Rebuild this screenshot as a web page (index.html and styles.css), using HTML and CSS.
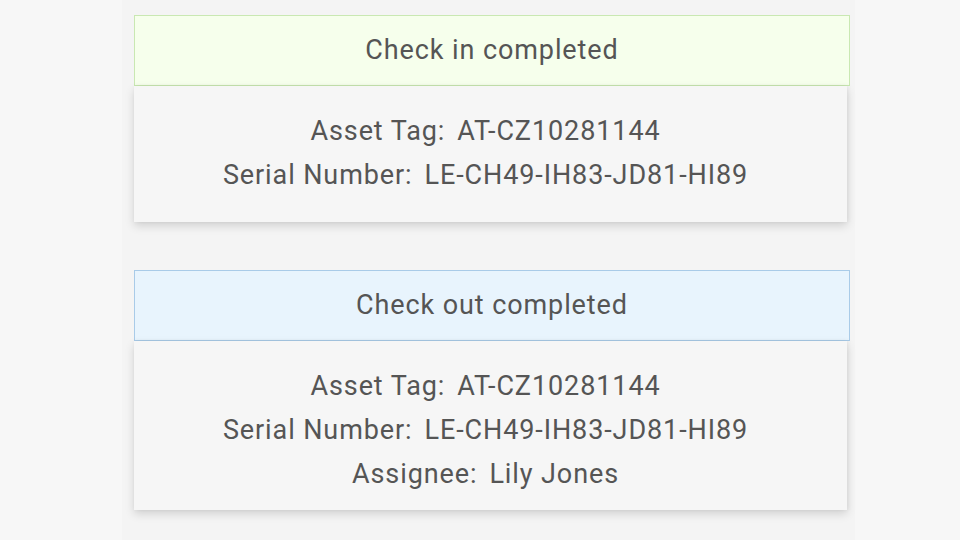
FILE: index.html
```html
<!DOCTYPE html>
<html>
<head>
<meta charset="utf-8">
<link rel="stylesheet" href="styles.css">
</head>
<body>
<div class="page">
  <div class="column">
    <div class="card">
      <div class="card-head head-in">Check in completed</div>
      <div class="card-body">
        <div class="row"><span class="label">Asset Tag:</span><span>AT-CZ10281144</span></div>
        <div class="row"><span class="label">Serial Number:</span><span>LE-CH49-IH83-JD81-HI89</span></div>
        <div class="spacer"></div>
      </div>
    </div>
    <div class="card">
      <div class="card-head head-out">Check out completed</div>
      <div class="card-body">
        <div class="row"><span class="label">Asset Tag:</span><span>AT-CZ10281144</span></div>
        <div class="row"><span class="label">Serial Number:</span><span>LE-CH49-IH83-JD81-HI89</span></div>
        <div class="row"><span class="label">Assignee:</span><span>Lily Jones</span></div>
      </div>
    </div>
  </div>
</div>
</body>
</html>
```
FILE: styles.css
```css
html, body {
  margin: 0;
  padding: 0;
  background: #f7f7f7;
}
body {
  font-family: Roboto, "Liberation Sans", sans-serif;
  color: #555;
  width: 960px;
  height: 540px;
  overflow: hidden;
}
.page {
  display: flex;
}
.column {
  margin-left: 122px;
  width: 733px;
  height: 540px;
  background: #f4f4f4;
  padding: 15px 0 0 12px;
  box-sizing: border-box;
  display: flex;
  flex-direction: column;
  gap: 48px;
}
.card {
  display: flex;
  flex-direction: column;
  align-items: flex-start;
}
.card-head {
  width: 716px;
  height: 71px;
  box-sizing: border-box;
  display: flex;
  align-items: center;
  justify-content: center;
  font-size: 27px;
  letter-spacing: 0.9px;
  padding-bottom: 1px;
}
.head-in {
  background: #f6ffec;
  border: 1px solid #c9e8b2;
}
.head-out {
  background: #e8f4fd;
  border: 1px solid #a9cbe8;
}
.card-body {
  width: 713px;
  box-sizing: border-box;
  background: #f6f6f6;
  padding: 23px 10px 14px 0;
  box-shadow: 0 4px 9px rgba(0,0,0,0.14), 1px 0 4px rgba(0,0,0,0.06);
  display: flex;
  flex-direction: column;
  align-items: center;
  font-size: 27px;
  letter-spacing: 0.9px;
  line-height: 44px;
}
.row {
  height: 44px;
}
.spacer {
  height: 11px;
}
.label {
  margin-right: 12px;
}
```
